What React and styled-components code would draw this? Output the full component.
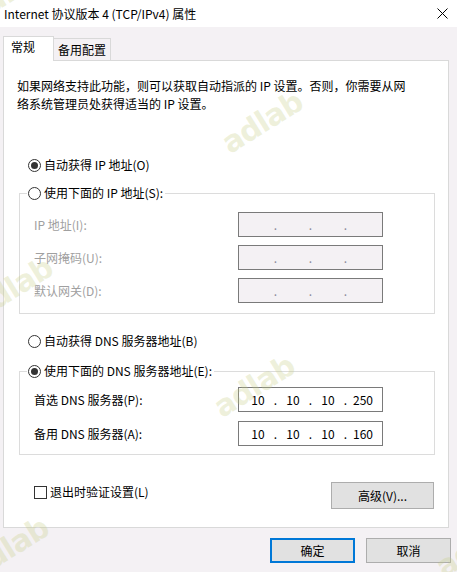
import React from 'react'
import styled, { createGlobalStyle } from 'styled-components'

const GlobalStyle = createGlobalStyle`
  html, body {
    margin: 0;
    padding: 0;
    background: #f4f1f4;
  }
  body {
    font-family: "Noto Sans CJK SC", "Noto Sans", sans-serif;
    font-size: 12px;
    color: #000;
  }
`

const Window = styled.div`
  position: relative;
  width: 457px;
  height: 572px;
  overflow: hidden;
  background: #f4f1f4;
  display: flex;
  flex-direction: column;
`

const TitleBar = styled.div`
  height: 27px;
  flex: none;
  background: #fff;
  display: flex;
  align-items: center;
  justify-content: space-between;
  padding: 0 9px 0 4px;
  line-height: 18px;
`

const TabStrip = styled.div`
  position: relative;
  z-index: 1;
  display: flex;
  align-items: flex-end;
  margin: 9px 0 -1px 0;
  padding-left: 3px;
`

const Tab = styled.div`
  box-sizing: border-box;
  width: ${p => (p.$active ? 51 : 57)}px;
  height: ${p => (p.$active ? 25 : 22)}px;
  margin-bottom: ${p => (p.$active ? 0 : 1)}px;
  padding: ${p => (p.$active ? '1px 0 0 7px' : '2px 0 0 4px')};
  line-height: 18px;
  background: ${p => (p.$active ? '#fff' : '#f4f1f4')};
  border: 1px solid #d9d9d9;
  border-bottom: none;
  border-left: ${p => (p.$active ? '1px solid #d9d9d9' : 'none')};
`

const Panel = styled.div`
  box-sizing: border-box;
  margin-left: 3px;
  width: 446px;
  height: 468px;
  flex: none;
  background: #fff;
  border: 1px solid #d9d9d9;
  padding-top: 16px;
`

const Intro = styled.p`
  margin: 0 0 0 13px;
  width: 400px;
  line-height: 18px;
`

const RadioRow = styled.div`
  display: flex;
  align-items: center;
  gap: 3px;
  height: 18px;
  margin: ${p => p.$mt}px 0 0 24px;
  line-height: 18px;
`

const Circle = styled.span`
  box-sizing: border-box;
  width: 13px;
  height: 13px;
  border: 1px solid #333;
  border-radius: 50%;
  background: #fff;
  display: flex;
  align-items: center;
  justify-content: center;

  &::after {
    content: '';
    width: 7px;
    height: 7px;
    border-radius: 50%;
    background: ${p => (p.$checked ? '#333' : 'transparent')};
  }
`

const GroupBox = styled.div`
  box-sizing: border-box;
  width: 416px;
  margin: ${p => p.$mt}px 0 0 15px;
  border: 1px solid #dcdcdc;
  padding-bottom: ${p => p.$pb}px;
`

const Legend = styled.div`
  display: flex;
  align-items: center;
  gap: 3px;
  width: fit-content;
  height: 18px;
  margin: -10px 0 0 7px;
  padding: 0 2px 0 1px;
  background: #fff;
  line-height: 18px;
`

const FieldGrid = styled.div`
  display: grid;
  grid-template-columns: 1fr 145px;
  align-items: center;
  row-gap: ${p => p.$gap}px;
  margin-top: ${p => p.$mt}px;
  padding: 0 51px 0 14px;
`

const FieldLabel = styled.span`
  line-height: 18px;
  color: ${p => (p.$disabled ? '#a0a0a0' : '#000')};
`

const IpBox = styled.div`
  box-sizing: border-box;
  height: 25px;
  display: flex;
  align-items: center;
  padding-left: 4px;
  border: 1px solid #7a7a7a;
  background: ${p => (p.$disabled ? '#f4f1f4' : '#fff')};
  color: ${p => (p.$disabled ? '#8a8a9a' : '#000')};
`

const Octet = styled.span`
  width: 30px;
  text-align: center;
  line-height: 18px;
`

const Dot = styled.span`
  width: 5px;
  text-align: center;
  line-height: 18px;
`

const OptionsRow = styled.div`
  display: flex;
  justify-content: space-between;
  align-items: flex-start;
  margin-top: 27px;
  padding: 0 14px 0 30px;
`

const CheckLabel = styled.label`
  display: flex;
  align-items: center;
  gap: 3px;
  margin-top: 1px;
  line-height: 18px;
`

const CheckBox = styled.span`
  box-sizing: border-box;
  width: 13px;
  height: 13px;
  border: 1px solid #333;
  background: #fff;
`

const Button = styled.button`
  box-sizing: border-box;
  width: ${p => p.$w}px;
  height: ${p => p.$h}px;
  padding: 0;
  font: inherit;
  line-height: 18px;
  color: #000;
  background: #e1e1e1;
  border: ${p => (p.$primary ? '2px solid #0078d7' : '1px solid #adadad')};
`

const Footer = styled.div`
  display: flex;
  justify-content: flex-end;
  gap: 11px;
  margin-top: 10px;
  padding-right: 6px;
`

const Watermark = styled.span`
  position: absolute;
  left: ${p => p.$x}px;
  top: ${p => p.$y}px;
  transform: translate(-50%, -50%) rotate(-32deg);
  font-family: "DejaVu Sans", sans-serif;
  font-weight: bold;
  font-size: 30px;
  letter-spacing: -1px;
  color: rgba(196, 204, 130, 0.28);
  pointer-events: none;
  z-index: 5;
`

const CloseIcon = () => (
  <svg width="11" height="11" viewBox="0 0 11 11">
    <path d="M0.5 0.5 L10.5 10.5 M10.5 0.5 L0.5 10.5" stroke="#000" strokeWidth="1" />
  </svg>
)

const IpField = ({ value, disabled }) => {
  const parts = value || ['', '', '', '']
  return (
    <IpBox $disabled={disabled}>
      <Octet>{parts[0]}</Octet>
      <Dot>.</Dot>
      <Octet>{parts[1]}</Octet>
      <Dot>.</Dot>
      <Octet>{parts[2]}</Octet>
      <Dot>.</Dot>
      <Octet>{parts[3]}</Octet>
    </IpBox>
  )
}

const marks = [
  [-18, 8],
  [262, 122],
  [12, 288],
  [254, 386],
  [8, 548],
  [476, 546],
]

export default function App() {
  return (
    <Window>
      <GlobalStyle />
      <TitleBar>
        <span>Internet 协议版本 4 (TCP/IPv4) 属性</span>
        <CloseIcon />
      </TitleBar>

      <TabStrip>
        <Tab $active>常规</Tab>
        <Tab>备用配置</Tab>
      </TabStrip>

      <Panel>
        <Intro>
          如果网络支持此功能，则可以获取自动指派的 IP 设置。否则，你需要从网
          <br />
          络系统管理员处获得适当的 IP 设置。
        </Intro>

        <RadioRow $mt={43}>
          <Circle $checked />
          <span>自动获得 IP 地址(O)</span>
        </RadioRow>

        <GroupBox $mt={19} $pb={10}>
          <Legend>
            <Circle />
            <span>使用下面的 IP 地址(S):</span>
          </Legend>
          <FieldGrid $mt={10} $gap={8}>
            <FieldLabel $disabled>IP 地址(I):</FieldLabel>
            <IpField disabled />
            <FieldLabel $disabled>子网掩码(U):</FieldLabel>
            <IpField disabled />
            <FieldLabel $disabled>默认网关(D):</FieldLabel>
            <IpField disabled />
          </FieldGrid>
        </GroupBox>

        <RadioRow $mt={18}>
          <Circle />
          <span>自动获得 DNS 服务器地址(B)</span>
        </RadioRow>

        <GroupBox $mt={21} $pb={8}>
          <Legend>
            <Circle $checked />
            <span>使用下面的 DNS 服务器地址(E):</span>
          </Legend>
          <FieldGrid $mt={7} $gap={9}>
            <FieldLabel>首选 DNS 服务器(P):</FieldLabel>
            <IpField value={['10', '10', '10', '250']} />
            <FieldLabel>备用 DNS 服务器(A):</FieldLabel>
            <IpField value={['10', '10', '10', '160']} />
          </FieldGrid>
        </GroupBox>

        <OptionsRow>
          <CheckLabel>
            <CheckBox />
            <span>退出时验证设置(L)</span>
          </CheckLabel>
          <Button $w={103} $h={27}>高级(V)...</Button>
        </OptionsRow>
      </Panel>

      <Footer>
        <Button $w={85} $h={25} $primary>确定</Button>
        <Button $w={85} $h={25}>取消</Button>
      </Footer>

      {marks.map(([x, y], i) => (
        <Watermark key={i} $x={x} $y={y}>adlab</Watermark>
      ))}
    </Window>
  )
}
